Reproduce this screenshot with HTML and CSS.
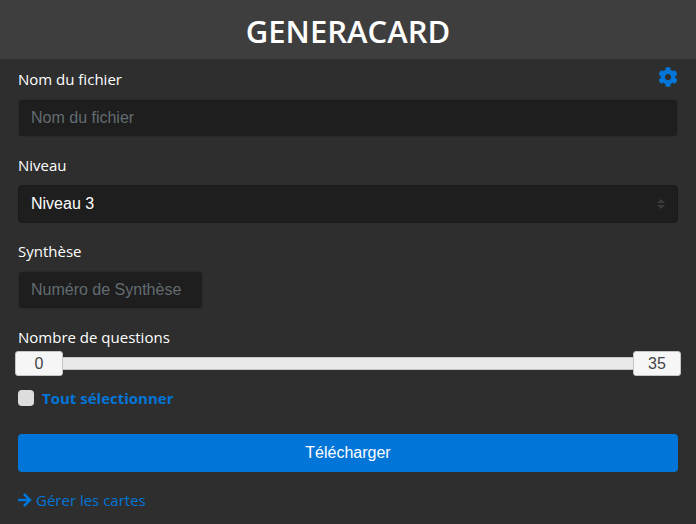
FILE: index.html
```html
<!DOCTYPE html>
<html lang="fr">
<head>
<meta charset="utf-8">
<title>Generacard</title>
<meta name="viewport" content="width=device-width, initial-scale=1">
<link rel="stylesheet" href="styles.css">
</head>
<body>
<header class="header"><h1 class="title">GENERACARD</h1></header>
<main class="content">
  <form class="form">
    <div class="group">
      <div class="label-row">
        <label class="label" for="filename">Nom du fichier</label>
        <a class="settings" href="#parametres" aria-label="Paramètres">
          <svg class="gear" viewBox="0 0 512 512" fill="currentColor" aria-hidden="true"><path d="M487.400 315.700l-42.600-24.600c4.300-23.200 4.300-47 0-70.200l42.600-24.600c4.900-2.800 7.100-8.600 5.500-14-11.100-35.600-30-67.800-54.700-94.600-3.800-4.100-10-5.100-14.800-2.300L380.800 110c-17.900-15.400-38.500-27.300-60.800-35.100V25.800c0-5.600-3.900-10.500-9.400-11.700-36.700-8.200-74.300-7.800-109.200 0-5.500 1.200-9.400 6.100-9.400 11.700V75c-22.200 7.900-42.800 19.800-60.800 35.100L88.700 85.500c-4.900-2.800-11-1.900-14.800 2.300-24.700 26.700-43.600 58.900-54.700 94.600-1.700 5.400.6 11.200 5.500 14L67.300 221c-4.300 23.200-4.300 47 0 70.200l-42.600 24.600c-4.900 2.800-7.100 8.600-5.500 14 11.100 35.600 30 67.800 54.700 94.600 3.800 4.100 10 5.100 14.800 2.300l42.600-24.600c17.900 15.400 38.500 27.300 60.800 35.100v49.200c0 5.600 3.900 10.500 9.400 11.700 36.700 8.200 74.300 7.800 109.200 0 5.500-1.200 9.400-6.100 9.400-11.700v-49.200c22.200-7.900 42.800-19.800 60.800-35.100l42.600 24.600c4.900 2.800 11 1.900 14.800-2.300 24.700-26.700 43.600-58.900 54.700-94.600 1.500-5.500-.7-11.300-5.600-14.100zM256 336c-44.100 0-80-35.900-80-80s35.900-80 80-80 80 35.900 80 80-35.900 80-80 80z"/></svg>
        </a>
      </div>
      <input class="control" id="filename" type="text" placeholder="Nom du fichier">
    </div>
    <div class="group">
      <label class="label" for="level">Niveau</label>
      <div class="select-wrap">
        <select class="control" id="level"><option>Niveau 3</option></select>
        <svg class="select-arrow" viewBox="0 0 8 10" aria-hidden="true"><path d="M4 0 0 4h8zM4 10 0 6h8z"/></svg>
      </div>
    </div>
    <div class="group">
      <label class="label" for="summary">Synthèse</label>
      <input class="control control-short" id="summary" type="text" placeholder="Numéro de Synthèse">
    </div>
    <fieldset class="range-group">
      <legend class="label">Nombre de questions</legend>
      <div class="slider">
        <div class="track"></div>
        <input class="range" type="range" min="0" max="35" value="0" aria-label="Minimum">
        <input class="range" type="range" min="0" max="35" value="35" aria-label="Maximum">
        <output class="value value-min">0</output>
        <output class="value value-max">35</output>
      </div>
    </fieldset>
    <div class="check">
      <input class="checkbox" id="all" type="checkbox">
      <label class="check-label" for="all">Tout sélectionner</label>
    </div>
    <button class="button" type="button">Télécharger</button>
  </form>
  <a class="manage" href="#cartes">
    <svg class="arrow" viewBox="0 0 14 14" aria-hidden="true"><path d="M0 7h12M6 1l6 6-6 6"/></svg>
    Gérer les cartes
  </a>
</main>
</body>
</html>
```

FILE: styles.css
```css
* { box-sizing: border-box; }

body {
  margin: 0;
  background: #2e2e2e;
  color: #fff;
  font: 15px/24px "Open Sans", "Noto Sans", sans-serif;
}

.header {
  padding: 11px 16px 8px;
  background: #3e3e3e;
  text-align: center;
}

.title {
  margin: 0;
  font-size: 31px;
  line-height: 40px;
  font-weight: 600;
}

.content { padding: 8px 18px; }

.group { margin-bottom: 16px; }

.label {
  display: block;
  padding: 0;
  margin-bottom: 8px;
}

.label-row {
  display: flex;
  justify-content: space-between;
}

.settings {
  height: 20px;
  color: #0275d8;
}

.gear {
  display: block;
  width: 20px;
  height: 20px;
}

.control {
  display: block;
  width: 100%;
  height: 38px;
  padding: 0 12px;
  border: 1px solid #292929;
  border-radius: 4px;
  background: #1e1e1e;
  color: #fff;
  font: 16px/24px "Liberation Sans", Arial, sans-serif;
  appearance: none;
}

.control::placeholder {
  color: #636c72;
  opacity: 1;
}

select.control { border-color: #1a1a1a; }

.control-short { width: 185px; }

.select-wrap {
  display: grid;
  align-items: center;
}

.select-wrap > * { grid-area: 1 / 1; }

.select-arrow {
  justify-self: end;
  width: 8px;
  height: 10px;
  margin-right: 13px;
  fill: #3a3a3a;
  pointer-events: none;
}

.range-group {
  min-width: 0;
  margin: 0;
  padding: 0;
  border: 0;
}

.range-group .label { margin-bottom: 2px; }

.slider {
  display: grid;
  grid-template-columns: 48px 1fr 48px;
  align-items: center;
  height: 25px;
  margin: 0 -3px;
}

.slider > * { grid-row: 1; }

.track {
  grid-column: 1 / -1;
  height: 13px;
  margin: 0 3px;
  border: 1px solid #c5c5c5;
  border-radius: 3px;
  background: #e9e9e9;
}

.range {
  grid-column: 1 / -1;
  width: 100%;
  height: 25px;
  margin: 0;
  background: transparent;
  appearance: none;
  pointer-events: none;
}

.range::-webkit-slider-thumb {
  width: 48px;
  height: 25px;
  border: 1px solid #c5c5c5;
  border-radius: 3px;
  background: #f6f6f6;
  appearance: none;
  pointer-events: auto;
}

.value {
  z-index: 1;
  color: #454545;
  font: 16px/25px "Liberation Sans", Arial, sans-serif;
  text-align: center;
  pointer-events: none;
}

.value-min { grid-column: 1; }
.value-max { grid-column: 3; }

.check {
  display: flex;
  align-items: center;
  gap: 8px;
  margin: 10px 0 24px;
}

.checkbox {
  width: 16px;
  height: 16px;
  margin: 0;
  border-radius: 4px;
  background: #ddd;
  appearance: none;
}

.checkbox:checked { background: #0275d8; }

.check-label {
  color: #0275d8;
  font-weight: 700;
}

.button {
  display: block;
  width: 100%;
  height: 38px;
  padding: 0 16px;
  border: 0;
  border-radius: 4px;
  background: #0275d8;
  color: #fff;
  font: 16px/24px "Liberation Sans", Arial, sans-serif;
}

.manage {
  display: flex;
  align-items: center;
  gap: 4px;
  width: max-content;
  margin-top: 16px;
  color: #0275d8;
  text-decoration: none;
}

.arrow {
  width: 14px;
  height: 14px;
  fill: none;
  stroke: currentColor;
  stroke-width: 2.5;
}
```
